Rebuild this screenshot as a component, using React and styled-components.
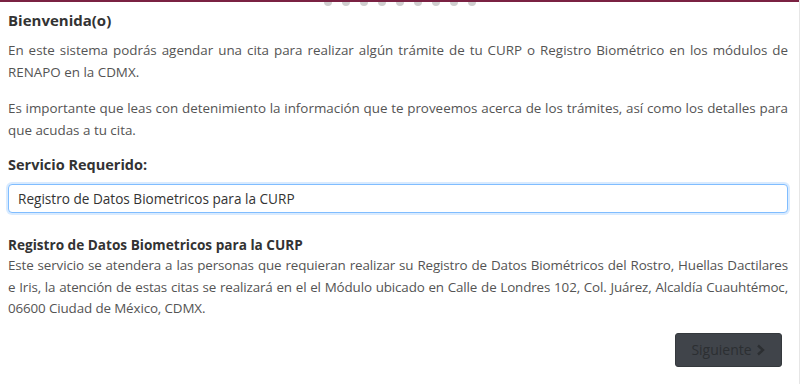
import styled, { createGlobalStyle } from "styled-components";

const GlobalStyle = createGlobalStyle`
  html, body {
    margin: 0;
    padding: 0;
    background: #ffffff;
  }
  body {
    font-family: "Open Sans", "Noto Sans", sans-serif;
    color: #555555;
  }
`;

function App() {
    const dots = Array.from({ length: 9 });

    return (
        <Page>
            <GlobalStyle />
            <TopBar>
                <Dots>
                    {dots.map((_, i) => <Dot key={i} />)}
                </Dots>
            </TopBar>
            <Content>
                <Heading>Bienvenida(o)</Heading>
                <Paragraph>
                    En este sistema podrás agendar una cita para realizar algún trámite de tu CURP o Registro Biométrico en los módulos de RENAPO en la CDMX.
                </Paragraph>
                <Paragraph>
                    Es importante que leas con detenimiento la información que te proveemos acerca de los trámites, así como los detalles para que acudas a tu cita.
                </Paragraph>

                <Label htmlFor="servicio">Servicio Requerido:</Label>
                <Select id="servicio" defaultValue="biometricos">
                    <option value="biometricos">Registro de Datos Biometricos para la CURP</option>
                </Select>

                <ServiceInfo>
                    <ServiceTitle>Registro de Datos Biometricos para la CURP</ServiceTitle>
                    <ServiceText>
                        Este servicio se atendera a las personas que requieran realizar su Registro de Datos Biométricos del Rostro, Huellas Dactilares e{"\u00a0"}Iris, la atención de estas citas se realizará en el el Módulo ubicado en Calle de Londres 102, Col. Juárez, Alcaldía Cuauhtémoc, 06600 Ciudad de México, CDMX.
                    </ServiceText>
                </ServiceInfo>

                <Actions>
                    <NextButton disabled>
                        Siguiente
                        <svg width="10" height="12" viewBox="0 0 10 12">
                            <path d="M2 1.5 L7 6 L2 10.5" fill="none" stroke="currentColor" strokeWidth="2.4" />
                        </svg>
                    </NextButton>
                </Actions>
            </Content>
        </Page>
    );
}

export default App;

// Styles

const Page = styled.div`
    width: 800px;
    height: 384px;
    box-sizing: border-box;
    border-right: 1px solid #e6e6e6;
    overflow: hidden;
`;

const TopBar = styled.div`
    height: 2px;
    background: #7a2142;
    position: relative;
`;

const Dots = styled.div`
    position: absolute;
    top: 2px;
    left: 0;
    right: 0;
    display: flex;
    justify-content: center;
    gap: 10px;
    height: 4px;
    overflow: hidden;
`;

const Dot = styled.span`
    width: 8px;
    height: 8px;
    border-radius: 50%;
    background: #cfcfcf;
    margin-top: -4px;
`;

const Content = styled.div`
    padding: 8px 11px 0 8px;
`;

const Heading = styled.h1`
    margin: 0 0 8px;
    font-size: 15px;
    font-weight: 700;
    line-height: 21px;
    color: #333333;
`;

const Paragraph = styled.p`
    margin: 0 0 14px;
    font-size: 13.4px;
    line-height: 22px;
    text-align: justify;
    color: #545454;
`;

const Label = styled.label`
    display: block;
    margin: 14px 0 9px;
    font-size: 14.5px;
    font-weight: 700;
    line-height: 20px;
    color: #333333;
`;

const Select = styled.select`
    display: block;
    width: 100%;
    height: 29px;
    box-sizing: border-box;
    padding: 0 9px;
    font-family: "Open Sans", "Noto Sans", sans-serif;
    font-size: 13.6px;
    color: #333333;
    background: #ffffff;
    border: 1px solid #80bdff;
    border-radius: 4px;
    box-shadow: 0 0 0 2px rgba(128, 189, 255, 0.3);
    appearance: none;
    outline: none;
`;

const ServiceInfo = styled.div`
    margin-top: 22px;
`;

const ServiceTitle = styled.h2`
    margin: 0;
    font-size: 13.6px;
    font-weight: 700;
    line-height: 20px;
    color: #333333;
`;

const ServiceText = styled.p`
    margin: 0;
    font-size: 13.4px;
    line-height: 21.5px;
    letter-spacing: -0.13px;
    text-align: justify;
    color: #545454;
`;

const Actions = styled.div`
    display: flex;
    justify-content: flex-end;
    padding-right: 6px;
    margin-top: 13px;
`;

const NextButton = styled.button`
    display: flex;
    align-items: center;
    gap: 4px;
    width: 107px;
    height: 34px;
    justify-content: center;
    font-family: "Open Sans", "Noto Sans", sans-serif;
    font-size: 14px;
    color: #2c2f32;
    background: #40444a;
    border: 1px solid #35393d;
    border-radius: 3px;
    cursor: not-allowed;
`;
